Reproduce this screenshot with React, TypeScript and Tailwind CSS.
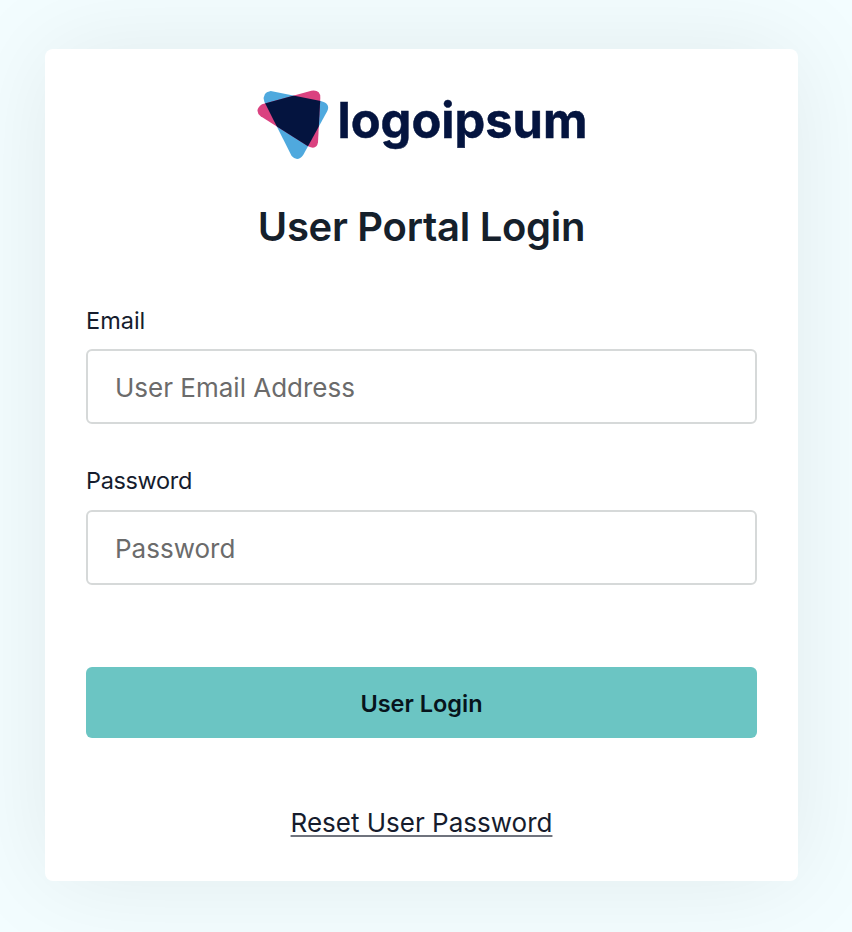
import React from "react";

const blueTriangle =
  "M62 34 L212 64 Q242 71 232 94 L160 225 Q143 249 125 229 L43 66 Q35 38 62 34 Z";
const pinkTriangle =
  "M36 74 L184 33 Q211 29 211 54 L204 188 Q200 212 174 200 L32 110 Q11 91 36 74 Z";

function Logo() {
  return (
    <svg
      className="h-[100px] w-[360px] overflow-visible"
      viewBox="250 70 360 100"
      role="img"
      aria-label="logoipsum"
    >
      <defs>
        <clipPath id="blue-clip">
          <path d={blueTriangle} />
        </clipPath>
      </defs>
      <g transform="translate(250 79.7) scale(0.33333)">
        <path d={blueTriangle} fill="#4fa9de" />
        <path d={pinkTriangle} fill="#da4280" />
        <path d={pinkTriangle} fill="#04143f" clipPath="url(#blue-clip)" />
      </g>
      <text
        x="337.5"
        y="138"
        fontSize="50"
        fontWeight="700"
        fill="#04143f"
        stroke="#04143f"
        strokeWidth="0.5"
        textLength="250"
        lengthAdjust="spacingAndGlyphs"
        className="font-['Inter',sans-serif]"
      >
        logoipsum
      </text>
    </svg>
  );
}

type FieldProps = {
  label: string;
  placeholder: string;
  type: string;
  labelClass: string;
};

function Field({ label, placeholder, type, labelClass }: FieldProps) {
  return (
    <label className="flex flex-col">
      <span className={`h-[30px] leading-[30px] text-[#161c2d] ${labelClass}`}>{label}</span>
      <input
        type={type}
        placeholder={placeholder}
        className="mt-[14px] h-[75px] w-full rounded-md border-2 border-[#d6d9d9] bg-white px-[27px] pt-[2px] text-[26px] text-[#161c2d] placeholder:text-[#6b6b6b]"
      />
    </label>
  );
}

export default function App() {
  return (
    <main className="flex h-[932px] w-[852px] flex-col overflow-hidden bg-[#f3fdff] pl-[45px] pt-[49px] font-['Inter',sans-serif]">
      <form className="flex h-[832px] w-[753px] flex-col rounded-lg bg-white px-[41px] pt-[21px] shadow-[0_0_100px_rgba(0,0,0,0.08)]">
        <div className="flex h-[100px] pl-[164px]">
          <Logo />
        </div>
        <h1 className="mt-[33px] text-center text-[40px] font-semibold leading-[48px] tracking-[-0.28px] text-[#15202b]">
          User Portal Login
        </h1>
        <div className="mt-[54px] flex flex-col gap-[42px]">
          <Field
            label="Email"
            placeholder="User Email Address"
            type="email"
            labelClass="pt-px text-[23.5px]"
          />
          <Field
            label="Password"
            placeholder="Password"
            type="password"
            labelClass="text-[23.5px] tracking-[-0.35px]"
          />
        </div>
        <button
          type="button"
          className="mt-[82px] h-[71px] w-full rounded-md bg-[#6bc5c3] pt-[2px] text-[23.5px] font-semibold text-[#07141c]"
        >
          User Login
        </button>
        <a
          href="#"
          className="mt-[69px] self-center text-[26px] leading-[32px] text-[#161c2d] underline decoration-[#6f737d] decoration-2 underline-offset-[3px]"
        >
          Reset User Password
        </a>
      </form>
    </main>
  );
}
